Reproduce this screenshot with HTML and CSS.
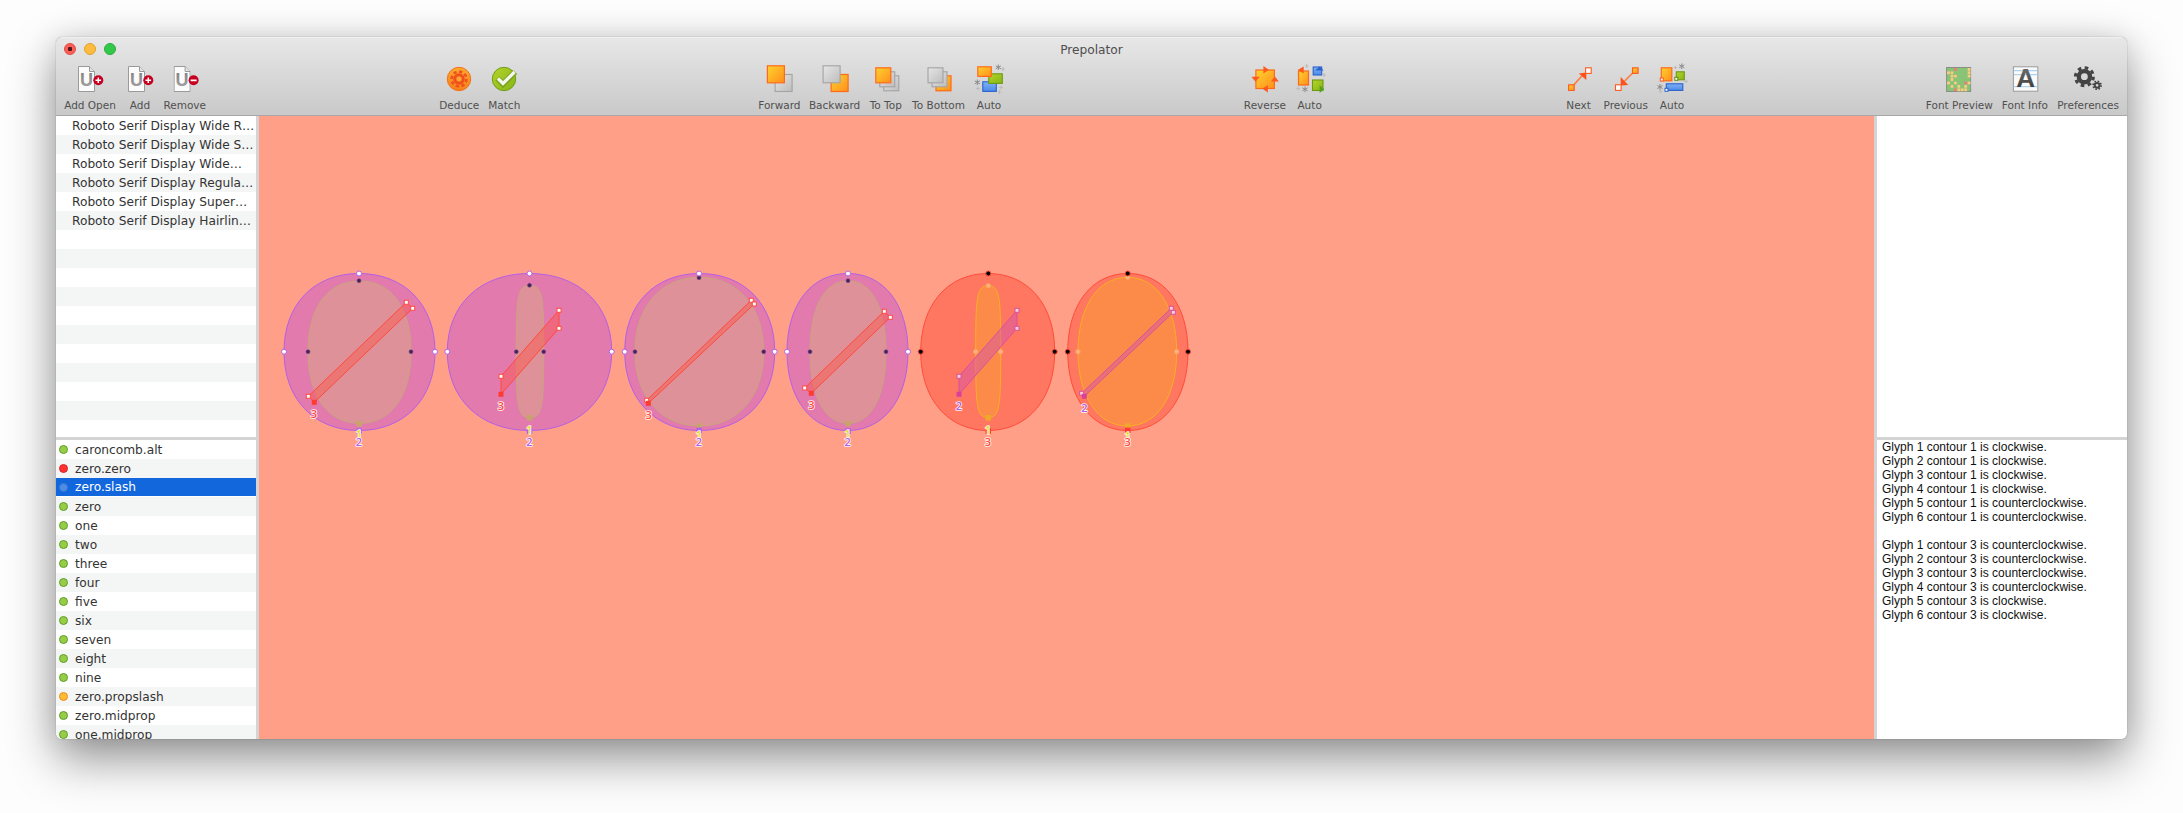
FILE: index.html
```html
<!DOCTYPE html>
<html lang="en">
<head>
<meta charset="utf-8">
<title>Prepolator</title>
<link rel="stylesheet" href="styles.css">
</head>
<body>
<svg class="defs" width="0" height="0" aria-hidden="true">
  <defs>
    <linearGradient id="gO" x1="0" y1="0" x2="1" y2="1"><stop offset="0" stop-color="#ffd22e"/><stop offset="1" stop-color="#ff8f1c"/></linearGradient>
    <linearGradient id="gG" x1="0" y1="0" x2="1" y2="1"><stop offset="0" stop-color="#e6e6e6"/><stop offset="1" stop-color="#bdbdbd"/></linearGradient>
    <linearGradient id="gL" x1="0" y1="0" x2="1" y2="1"><stop offset="0" stop-color="#b4d32c"/><stop offset="1" stop-color="#86b514"/></linearGradient>
    <linearGradient id="gB" x1="0" y1="0" x2="0" y2="1"><stop offset="0" stop-color="#7fb2f5"/><stop offset="1" stop-color="#4d8ae8"/></linearGradient>
    <linearGradient id="gD" x1="0" y1="0" x2="0" y2="1"><stop offset="0" stop-color="#ffab30"/><stop offset="1" stop-color="#f77f18"/></linearGradient>
    <linearGradient id="gU" x1="0" y1="0" x2="0" y2="1"><stop offset="0" stop-color="#7c7c7c"/><stop offset="1" stop-color="#a6a6a6"/></linearGradient>
    <linearGradient id="gA" x1="0" y1="0" x2="0" y2="1"><stop offset="0" stop-color="#777"/><stop offset="1" stop-color="#333"/></linearGradient>
    <symbol id="doc" viewBox="0 0 17 26">
      <path d="M.5.5H11.5L16.5 5.5V25.5H.5Z" fill="#fbfbfb" stroke="#9a9a9a"/>
      <path d="M11.5.5V5.5H16.5" fill="#e2e2e2" stroke="#9a9a9a"/>
      <text class="doc-u" x="8.5" y="19.5" fill="url(#gU)">U</text>
    </symbol>
    <symbol id="star" viewBox="0 0 6 6">
      <path d="M3 0V6M.4 1.5L5.6 4.5M.4 4.5L5.6 1.5" stroke="#8a8a8a" stroke-width="1"/>
    </symbol>
    <symbol id="plus" viewBox="0 0 4 4">
      <path d="M2 0V4M0 2H4" stroke="#bdbdbd" stroke-width="1.2"/>
    </symbol>
  </defs>
</svg>

<div class="window">
  <header class="chrome">
    <div class="titlebar">
      <div class="lights">
        <span class="light light-red"></span>
        <span class="light light-yellow"></span>
        <span class="light light-green"></span>
      </div>
      <div class="title">Prepolator</div>
    </div>
    <div class="toolbar">
      <div class="group g1">
        <div class="tool w60">
          <svg class="icon" viewBox="74 63 32 32"><use href="#doc" x="78" y="66" width="17" height="26"/><circle cx="98.3" cy="80.3" r="5" fill="#c6001f"/><path d="M95.5 80.3H101.1M98.3 77.5V83.1" stroke="#fff" stroke-width="1.5"/></svg>
          <span class="label">Add Open</span>
        </div>
        <div class="tool w40">
          <svg class="icon" viewBox="124 63 32 32"><use href="#doc" x="128" y="66" width="17" height="26"/><circle cx="148.3" cy="80.3" r="5" fill="#c6001f"/><path d="M145.5 80.3H151.1M148.3 77.5V83.1" stroke="#fff" stroke-width="1.5"/></svg>
          <span class="label">Add</span>
        </div>
        <div class="tool w49">
          <svg class="icon" viewBox="168.7 63 32 32"><use href="#doc" x="173.3" y="66" width="17" height="26"/><circle cx="193.3" cy="80.3" r="5" fill="#c6001f"/><path d="M190.3 80.3H196.3" stroke="#fff" stroke-width="1.7"/></svg>
          <span class="label">Remove</span>
        </div>
      </div>

      <div class="group g2">
        <div class="tool w48">
          <svg class="icon" viewBox="444 63 32 32"><circle cx="460" cy="79" r="11.7" fill="url(#gD)" stroke="#f0701c"/><circle cx="460" cy="79" r="7.4" fill="none" stroke="#f0501e" stroke-width="2.6" stroke-dasharray="3.2 2.6"/><circle cx="460" cy="79" r="4.3" fill="none" stroke="#f0501e" stroke-width="3"/><circle cx="460" cy="79" r="2" fill="#ffa73a"/></svg>
          <span class="label">Deduce</span>
        </div>
        <div class="tool w42">
          <svg class="icon" viewBox="489 63 32 32"><circle cx="505" cy="79" r="11.7" fill="url(#gL)" stroke="#6f9e18"/><path d="M498.5 78.5L504 84L516 72" fill="none" stroke="#7da51e" stroke-width="6"/><path d="M499 78.5L504 83.5L515.5 72" fill="none" stroke="#f4f6ee" stroke-width="3.2"/></svg>
          <span class="label">Match</span>
        </div>
      </div>

      <div class="group g3">
        <div class="tool w52">
          <svg class="icon" viewBox="763.4 63 32 32"><rect x="775.5" y="74.5" width="17" height="17" fill="url(#gG)" stroke="#a3a3a3" stroke-width="1.1"/><rect x="767.8" y="65.8" width="17" height="17" fill="url(#gO)" stroke="#ff6a1a" stroke-width="1.2"/></svg>
          <span class="label">Forward</span>
        </div>
        <div class="tool w58">
          <svg class="icon" viewBox="818.7 63 32 32"><rect x="830.8" y="74.5" width="17" height="17" fill="url(#gO)" stroke="#ff6a1a" stroke-width="1.2"/><rect x="822.8" y="65.8" width="17" height="17" fill="url(#gG)" stroke="#a3a3a3" stroke-width="1.1"/></svg>
          <span class="label">Backward</span>
        </div>
        <div class="tool w44">
          <svg class="icon" viewBox="870 63 32 32"><rect x="883.8" y="75.8" width="15" height="15" fill="url(#gG)" stroke="#a3a3a3" stroke-width="1.1"/><rect x="879.8" y="71.8" width="15" height="15" fill="url(#gG)" stroke="#a3a3a3" stroke-width="1.1"/><rect x="875.8" y="67.8" width="15" height="15" fill="url(#gO)" stroke="#ff6a1a" stroke-width="1.2"/></svg>
          <span class="label">To Top</span>
        </div>
        <div class="tool w62">
          <svg class="icon" viewBox="922.8 63 32 32"><rect x="935.8" y="75.8" width="15" height="15" fill="url(#gO)" stroke="#ff6a1a" stroke-width="1.2"/><rect x="931.8" y="71.8" width="15" height="15" fill="url(#gG)" stroke="#a3a3a3" stroke-width="1.1"/><rect x="927.8" y="67.8" width="15" height="15" fill="url(#gG)" stroke="#a3a3a3" stroke-width="1.1"/></svg>
          <span class="label">To Bottom</span>
        </div>
        <div class="tool w39">
          <svg class="icon" viewBox="973 63 32 32"><use href="#star" x="995.3" y="64.3" width="6" height="6"/><use href="#star" x="974.3" y="79.3" width="6" height="6"/><use href="#plus" x="1001" y="67" width="4" height="4"/><use href="#plus" x="999" y="85.5" width="4" height="4"/><use href="#plus" x="997.5" y="90" width="4" height="4"/><use href="#plus" x="976" y="86.5" width="4" height="4"/><rect x="982.8" y="81.8" width="13.5" height="9.6" fill="url(#gB)" stroke="#2a62cc" stroke-width="1.1"/><rect x="988.8" y="73.8" width="13.5" height="9.6" fill="url(#gL)" stroke="#6e9a12" stroke-width="1.1"/><rect x="977.8" y="66.8" width="13.5" height="9.6" fill="url(#gO)" stroke="#ff6a1a" stroke-width="1.2"/></svg>
          <span class="label">Auto</span>
        </div>
      </div>

      <div class="group g4">
        <div class="tool w50">
          <svg class="icon" viewBox="1248.6 63 32 32"><rect x="1255.5" y="70" width="18.5" height="18.5" fill="url(#gO)" stroke="#ff6a1a" stroke-width="1.2"/><path d="M1263 66V73.5L1268.5 69.7ZM1270.5 81.5H1278.5L1274.5 76.5ZM1267.5 85V92.5L1262 88.7ZM1251 76.8H1259.5L1255 81.8Z" fill="#ff5a1e"/></svg>
          <span class="label">Reverse</span>
        </div>
        <div class="tool w39">
          <svg class="icon" viewBox="1293.3 63 32 32"><rect x="1297.8" y="71" width="10" height="14" fill="url(#gO)" stroke="#ff6a1a" stroke-width="1.2"/><path d="M1303 66.5V73.5L1297 70Z" fill="#ff5a1e"/><rect x="1312.5" y="67" width="8.5" height="8" fill="url(#gB)" stroke="#2a62cc" stroke-width="1.1"/><path d="M1314.5 70.5H1323L1319 66.5Z" fill="#2a62cc"/><rect x="1311.8" y="80" width="10.5" height="10.5" fill="url(#gL)" stroke="#6e9a12" stroke-width="1.1"/><path d="M1319 85.5V93L1323.5 89Z" fill="#4fa31e"/><use href="#star" x="1301.3" y="86.3" width="6" height="6"/><use href="#plus" x="1304" y="64" width="4" height="4"/><use href="#plus" x="1295.5" y="86.5" width="4" height="4"/><use href="#plus" x="1321.5" y="73" width="4" height="4"/></svg>
          <span class="label">Auto</span>
        </div>
      </div>

      <div class="group g5">
        <div class="tool w36">
          <svg class="icon" viewBox="1562.2 63 32 32"><path d="M1572 86L1581 76" stroke="#ff7a3c" stroke-width="1.6"/><path d="M1585.5 72.5V80L1578 73.5Z" fill="#ff4f1a"/><rect x="1567.8" y="84.8" width="5.6" height="5.6" fill="url(#gO)" stroke="#ff5a1e" stroke-width="1.1"/><rect x="1584.8" y="67.8" width="5.6" height="5.6" fill="#fff" stroke="#ff5a1e" stroke-width="1.1"/></svg>
          <span class="label">Next</span>
        </div>
        <div class="tool w58">
          <svg class="icon" viewBox="1609.3 63 32 32"><path d="M1633 72L1624 81" stroke="#ff7a3c" stroke-width="1.6"/><path d="M1620 85.5V77L1627.5 85Z" fill="#ff4f1a"/><rect x="1631.8" y="67.8" width="5.6" height="5.6" fill="url(#gO)" stroke="#ff5a1e" stroke-width="1.1"/><rect x="1614.8" y="84.8" width="5.6" height="5.6" fill="#fff" stroke="#ff5a1e" stroke-width="1.1"/></svg>
          <span class="label">Previous</span>
        </div>
        <div class="tool w34">
          <svg class="icon" viewBox="1655.5 63 32 32"><use href="#star" x="1678.3" y="63.3" width="6" height="6"/><use href="#star" x="1656.5" y="84" width="6" height="6"/><use href="#plus" x="1673" y="65.5" width="4" height="4"/><use href="#plus" x="1683.5" y="79.5" width="4" height="4"/><use href="#plus" x="1658" y="89.5" width="4" height="4"/><rect x="1660.8" y="67.8" width="10.5" height="13" fill="url(#gO)" stroke="#ff6a1a" stroke-width="1.2"/><rect x="1659.8" y="78" width="3" height="3" fill="#fff" stroke="#ff5a1e"/><rect x="1675.8" y="71.8" width="8" height="8" fill="url(#gL)" stroke="#6e9a12" stroke-width="1.1"/><rect x="1674.3" y="77.3" width="3" height="3" fill="#fff" stroke="#5f8c10"/><rect x="1665.8" y="83.8" width="16.5" height="6.6" fill="url(#gB)" stroke="#2a62cc" stroke-width="1.1"/><rect x="1664.5" y="88.3" width="3" height="3" fill="#fff" stroke="#2a62cc"/></svg>
          <span class="label">Auto</span>
        </div>
      </div>

      <div class="group g6">
        <div class="tool w76">
          <svg class="icon" viewBox="1942.9 63 32 32"><rect x="1946.5" y="67.5" width="24" height="24" fill="#7ecb6e" stroke="#8a8a8a"/><path d="M1947 71.3h3v3h-3zM1950.4 71.3h3v3h-3zM1967.4 68h3v3h-3zM1967.4 71.3h3v3h-3zM1950.4 74.7h3v3h-3zM1953.8 74.7h3v3h-3zM1967.4 74.7h3v3h-3zM1950.4 78.1h3v3h-3zM1947 81.5h3v3h-3zM1953.8 81.5h3v3h-3zM1967.4 81.5h3v3h-3zM1950.4 84.9h3v3h-3zM1957.2 84.9h3v3h-3zM1964 84.9h3v3h-3zM1957.2 88.3h3v3h-3zM1960.6 88.3h3v3h-3zM1964 88.3h3v3h-3z" fill="#f5d27a"/><path d="M1953.8 68h3v3h-3zM1964 81.5h3v3h-3zM1953.8 88.3h3v3h-3z" fill="#ec7f74"/><path d="M1950.2 67.5V91.5M1953.6 67.5V91.5M1957 67.5V91.5M1960.4 67.5V91.5M1963.8 67.5V91.5M1967.2 67.5V91.5M1946.5 71H1970.5M1946.5 74.4H1970.5M1946.5 77.8H1970.5M1946.5 81.2H1970.5M1946.5 84.6H1970.5M1946.5 88H1970.5" stroke="#a9b08e" stroke-width=".5"/></svg>
          <span class="label">Font Preview</span>
        </div>
        <div class="tool w55">
          <svg class="icon" viewBox="2008.4 63 32 32"><rect x="2012.8" y="66.8" width="24.4" height="24.4" fill="#fafafa" stroke="#9b9b9b"/><path d="M2013 70.7H2037M2013 74.7H2037M2013 86.7H2037" stroke="#9cc9ee" stroke-width="1"/><text class="info-a" x="2025" y="87" fill="url(#gA)">A</text></svg>
          <span class="label">Font Info</span>
        </div>
        <div class="tool w71">
          <svg class="icon" viewBox="2071.6 63 32 32"><circle cx="2084" cy="76.7" r="9" fill="none" stroke="#444" stroke-width="3" stroke-dasharray="3.6 3.47"/><circle cx="2084" cy="76.7" r="5.6" fill="none" stroke="#444" stroke-width="4.4"/><circle cx="2096.7" cy="85.3" r="4" fill="none" stroke="#444" stroke-width="1.6" stroke-dasharray="1.6 1.54"/><circle cx="2096.7" cy="85.3" r="2.4" fill="none" stroke="#444" stroke-width="2"/></svg>
          <span class="label">Preferences</span>
        </div>
      </div>
    </div>
  </header>

  <div class="body">
    <aside class="side side-left">
      <ul class="list list-top">
        <li class="row">Roboto Serif Display Wide R…</li>
        <li class="row">Roboto Serif Display Wide S…</li>
        <li class="row">Roboto Serif Display Wide…</li>
        <li class="row">Roboto Serif Display Regula…</li>
        <li class="row">Roboto Serif Display Super…</li>
        <li class="row">Roboto Serif Display Hairlin…</li>
        <li class="row"></li><li class="row"></li><li class="row"></li><li class="row"></li><li class="row"></li>
        <li class="row"></li><li class="row"></li><li class="row"></li><li class="row"></li><li class="row"></li><li class="row"></li>
      </ul>
      <ul class="list list-bottom">
        <li class="row"><i class="dot dot-green"></i>caroncomb.alt</li>
        <li class="row"><i class="dot dot-red"></i>zero.zero</li>
        <li class="row selected"><i class="dot dot-blue"></i>zero.slash</li>
        <li class="row"><i class="dot dot-green"></i>zero</li>
        <li class="row"><i class="dot dot-green"></i>one</li>
        <li class="row"><i class="dot dot-green"></i>two</li>
        <li class="row"><i class="dot dot-green"></i>three</li>
        <li class="row"><i class="dot dot-green"></i>four</li>
        <li class="row"><i class="dot dot-green"></i>five</li>
        <li class="row"><i class="dot dot-green"></i>six</li>
        <li class="row"><i class="dot dot-green"></i>seven</li>
        <li class="row"><i class="dot dot-green"></i>eight</li>
        <li class="row"><i class="dot dot-green"></i>nine</li>
        <li class="row"><i class="dot dot-orange"></i>zero.propslash</li>
        <li class="row"><i class="dot dot-green"></i>zero.midprop</li>
        <li class="row"><i class="dot dot-green"></i>one.midprop</li>
      </ul>
    </aside>

    <main class="canvas">
      <svg class="stage" viewBox="259 116 1615 623">
        <!-- glyph 1 -->
        <g class="scheme-a">
          <path class="outer" d="M359 273.5C404.3 273.5 435 304.6 435 351.7C435 398.8 404.3 430.5 359 430.5C313.7 430.5 284 398.8 284 351.7C284 304.6 313.7 273.5 359 273.5Z"/>
          <path class="inner" d="M359.5 281C391.5 281 411 307.7 411 351.7C411 395.7 391.5 423.3 359.5 423.3C327.5 423.3 308 395.7 308 351.7C308 307.7 327.5 281 359.5 281Z"/>
          <polygon class="slash" points="406.3,302.3 412.7,308.3 314.3,402.3 308.3,396.3"/>
          <rect class="s-outer" x="356.3" y="428.3" width="5.5" height="5.5"/>
          <rect class="s-inner" x="356.3" y="421" width="5.5" height="5.5"/>
          <circle class="p-outer" cx="359" cy="273.5" r="2.5"/><circle class="p-outer" cx="284" cy="351.7" r="2.5"/><circle class="p-outer" cx="435" cy="351.7" r="2.5"/>
          <circle class="p-inner" cx="359" cy="280.7" r="2"/><circle class="p-inner" cx="308" cy="351.7" r="2"/><circle class="p-inner" cx="411" cy="351.7" r="2"/>
          <rect class="p-slash" x="404.3" y="300.3" width="4" height="4"/><rect class="p-slash" x="410.7" y="306.3" width="4" height="4"/><rect class="p-slash" x="306.3" y="394.3" width="4" height="4"/><rect class="s-slash" x="311.8" y="399.8" width="5" height="5"/>
          <text class="num n1" x="359" y="438">1</text><text class="num n2" x="359" y="446.3">2</text><text class="num n3" x="314" y="418">3</text>
        </g>
        <!-- glyph 2 -->
        <g class="scheme-a">
          <path class="outer" d="M529.5 273.5C578.8 273.5 611.7 304.6 611.7 351.7C611.7 398.8 578.8 430.5 529.5 430.5C480.2 430.5 447.3 398.8 447.3 351.7C447.3 304.6 480.2 273.5 529.5 273.5Z"/>
          <path class="inner" d="M530 285.3C543 285.3 543.7 298.7 543.7 351.7C543.7 404.7 543 417.7 530 417.7C517 417.7 516.3 404.7 516.3 351.7C516.3 298.7 517 285.3 530 285.3Z"/>
          <polygon class="slash" points="559,310.3 559,328.3 501,394.3 501,376.3"/>
          <rect class="s-inner" x="526.8" y="415" width="5.5" height="5.5"/>
          <rect class="s-outer" x="526.8" y="428.3" width="5.5" height="5.5"/>
          <circle class="p-outer" cx="529.5" cy="273.5" r="2.5"/><circle class="p-outer" cx="447.3" cy="351.7" r="2.5"/><circle class="p-outer" cx="611.7" cy="351.7" r="2.5"/>
          <circle class="p-inner" cx="529.5" cy="285.3" r="2"/><circle class="p-inner" cx="516.3" cy="351.7" r="2"/><circle class="p-inner" cx="543.7" cy="351.7" r="2"/>
          <rect class="p-slash" x="557" y="308.3" width="4" height="4"/><rect class="p-slash" x="557" y="326.3" width="4" height="4"/><rect class="p-slash" x="499" y="374.3" width="4" height="4"/><rect class="s-slash" x="498.5" y="391.8" width="5" height="5"/>
          <text class="num n1" x="529.5" y="434">1</text><text class="num n2" x="529.5" y="446.3">2</text><text class="num n3" x="501" y="410">3</text>
        </g>
        <!-- glyph 3 -->
        <g class="scheme-a">
          <path class="outer" d="M699.5 273.5C744.7 273.5 774.7 304.6 774.7 351.7C774.7 398.8 744.7 430.5 699.5 430.5C654.7 430.5 624.7 398.8 624.7 351.7C624.7 304.6 654.7 273.5 699.5 273.5Z"/>
          <path class="inner" d="M699.4 277.3C738 277.3 763.7 307.1 763.7 351.7C763.7 396.3 738 426 699.4 426C660.8 426 635 396.3 635 351.7C635 307.1 660.8 277.3 699.4 277.3Z"/>
          <polygon class="slash" points="751.3,300.3 754.3,304 648.3,403.3 646.7,400.3"/>
          <rect class="s-inner" x="696.3" y="423.3" width="5.5" height="5.5"/>
          <rect class="s-outer" x="696.3" y="427.6" width="5.5" height="5.5"/>
          <circle class="p-inner" cx="699" cy="277.7" r="2"/><circle class="p-inner" cx="635" cy="351.7" r="2"/><circle class="p-inner" cx="763.7" cy="351.7" r="2"/>
          <circle class="p-outer" cx="699" cy="273.5" r="2.5"/><circle class="p-outer" cx="624.7" cy="351.7" r="2.5"/><circle class="p-outer" cx="774.7" cy="351.7" r="2.5"/>
          <rect class="p-slash" x="749.3" y="298.3" width="4" height="4"/><rect class="p-slash" x="752.3" y="302" width="4" height="4"/><rect class="p-slash" x="644.7" y="398.3" width="4" height="4"/><rect class="s-slash" x="645.8" y="400.8" width="5" height="5"/>
          <text class="num n1" x="699" y="439">1</text><text class="num n2" x="699" y="446.3">2</text><text class="num n3" x="648.7" y="419">3</text>
        </g>
        <!-- glyph 4 -->
        <g class="scheme-a">
          <path class="outer" d="M847.7 273.5C884 273.5 908 304.6 908 351.7C908 398.8 884 430.5 847.7 430.5C811.4 430.5 787 398.8 787 351.7C787 304.6 811.4 273.5 847.7 273.5Z"/>
          <path class="inner" d="M848 280.7C871.6 280.7 886 307.7 886 351.7C886 395.7 871.6 423.3 848 423.3C824.4 423.3 810 395.7 810 351.7C810 307.7 824.4 280.7 848 280.7Z"/>
          <polygon class="slash" points="884.3,311.3 890.3,317.3 811.3,393.3 804.7,388"/>
          <rect class="s-inner" x="845.3" y="420.8" width="5.5" height="5.5"/>
          <rect class="s-outer" x="845.3" y="428.3" width="5.5" height="5.5"/>
          <circle class="p-outer" cx="848" cy="273.5" r="2.5"/><circle class="p-outer" cx="787" cy="351.7" r="2.5"/><circle class="p-outer" cx="908" cy="351.7" r="2.5"/>
          <circle class="p-inner" cx="848" cy="280.7" r="2"/><circle class="p-inner" cx="810" cy="351.7" r="2"/><circle class="p-inner" cx="886" cy="351.7" r="2"/>
          <rect class="p-slash" x="882.3" y="309.3" width="4" height="4"/><rect class="p-slash" x="888.3" y="315.3" width="4" height="4"/><rect class="p-slash" x="802.7" y="386" width="4" height="4"/><rect class="s-slash" x="808.8" y="390.8" width="5" height="5"/>
          <text class="num n1" x="847.7" y="438.3">1</text><text class="num n2" x="847.7" y="446.3">2</text><text class="num n3" x="811.3" y="409">3</text>
        </g>
        <!-- glyph 5 -->
        <g class="scheme-b">
          <path class="outer" d="M988 273.5C1028.2 273.5 1054.7 304.6 1054.7 351.7C1054.7 398.8 1028.2 430.5 988 430.5C947.8 430.5 920.7 398.8 920.7 351.7C920.7 304.6 947.8 273.5 988 273.5Z"/>
          <path class="inner" d="M988.2 285.7C1000.1 285.7 1000.7 298.7 1000.7 351.7C1000.7 404.7 1000.1 417.7 988.2 417.7C976.3 417.7 975.7 404.7 975.7 351.7C975.7 298.7 976.3 285.7 988.2 285.7Z"/>
          <polygon class="slash" points="1017,310.3 1017,328.3 959,394.3 959,376.3"/>
          <rect class="s-inner" x="985.5" y="415" width="5.5" height="5.5"/>
          <rect class="s-outer" x="985.5" y="428.3" width="5.5" height="5.5"/>
          <circle class="p-outer" cx="988.3" cy="273.5" r="2.5"/><circle class="p-outer" cx="920.7" cy="351.7" r="2.5"/><circle class="p-outer" cx="1054.7" cy="351.7" r="2.5"/>
          <circle class="p-inner" cx="988.3" cy="285.7" r="2.3"/><circle class="p-inner" cx="975.7" cy="351.7" r="2.3"/><circle class="p-inner" cx="1000.7" cy="351.7" r="2.3"/>
          <rect class="p-slash" x="1015" y="308.3" width="4" height="4"/><rect class="p-slash" x="1015" y="326.3" width="4" height="4"/><rect class="p-slash" x="957" y="374.3" width="4" height="4"/><rect class="s-slash" x="956.5" y="391.8" width="5" height="5"/>
          <text class="num n1" x="988" y="434">1</text><text class="num n3" x="988" y="446.3">3</text><text class="num n2" x="959" y="410">2</text>
        </g>
        <!-- glyph 6 -->
        <g class="scheme-b">
          <path class="outer" d="M1127.8 273.5C1163.9 273.5 1188 304.6 1188 351.7C1188 398.8 1163.9 430.5 1127.8 430.5C1091.7 430.5 1067.7 398.8 1067.7 351.7C1067.7 304.6 1091.7 273.5 1127.8 273.5Z"/>
          <path class="inner" d="M1127.4 277.3C1157 277.3 1176.7 307.1 1176.7 351.7C1176.7 396.3 1157 426 1127.4 426C1097.8 426 1078 396.3 1078 351.7C1078 307.1 1097.8 277.3 1127.4 277.3Z"/>
          <polygon class="slash" points="1171.3,308.3 1173.3,312.3 1084.3,396.3 1081.7,393.3"/>
          <rect class="s-inner" x="1125" y="423.3" width="5.5" height="5.5"/>
          <rect class="s-outer" x="1125" y="427.6" width="5.5" height="5.5"/>
          <circle class="p-inner" cx="1127.7" cy="277.3" r="2.3"/><circle class="p-inner" cx="1078" cy="351.7" r="2.3"/><circle class="p-inner" cx="1176.7" cy="351.7" r="2.3"/>
          <circle class="p-outer" cx="1127.7" cy="273.5" r="2.5"/><circle class="p-outer" cx="1067.7" cy="351.7" r="2.5"/><circle class="p-outer" cx="1188" cy="351.7" r="2.5"/>
          <rect class="p-slash" x="1169.3" y="306.3" width="4" height="4"/><rect class="p-slash" x="1171.3" y="310.3" width="4" height="4"/><rect class="p-slash" x="1079.7" y="391.3" width="4" height="4"/><rect class="s-slash" x="1081.8" y="393.8" width="5" height="5"/>
          <text class="num n1" x="1127.7" y="439.5">1</text><text class="num n3" x="1127.7" y="446.3">3</text><text class="num n2" x="1084.3" y="412.3">2</text>
        </g>
      </svg>
    </main>

    <aside class="side side-right">
      <div class="pane-blank"></div>
      <div class="log">
        <p>Glyph 1 contour 1 is clockwise.</p>
        <p>Glyph 2 contour 1 is clockwise.</p>
        <p>Glyph 3 contour 1 is clockwise.</p>
        <p>Glyph 4 contour 1 is clockwise.</p>
        <p>Glyph 5 contour 1 is counterclockwise.</p>
        <p>Glyph 6 contour 1 is counterclockwise.</p>
        <p class="gap">Glyph 1 contour 3 is counterclockwise.</p>
        <p>Glyph 2 contour 3 is counterclockwise.</p>
        <p>Glyph 3 contour 3 is counterclockwise.</p>
        <p>Glyph 4 contour 3 is counterclockwise.</p>
        <p>Glyph 5 contour 3 is clockwise.</p>
        <p>Glyph 6 contour 3 is clockwise.</p>
      </div>
    </aside>
  </div>
</div>
</body>
</html>
```
FILE: styles.css
```css
* { box-sizing: border-box; }
html, body { margin: 0; height: 100%; }
body {
  background: #fdfdfd;
  overflow: hidden;
  font-family: "DejaVu Sans", "Open Sans", sans-serif;
  padding: 37px 56px 0;
}
.defs { position: absolute; width: 0; height: 0; }

.window {
  width: 2071px;
  height: 702px;
  display: flex;
  flex-direction: column;
  border-radius: 6px;
  overflow: hidden;
  background: #d4d4d4;
  box-shadow: 0 0 1px rgba(0,0,0,.55), 0 20px 48px rgba(0,0,0,.42), 0 0 28px rgba(0,0,0,.1);
}

/* title bar and toolbar */
.chrome {
  flex: 0 0 79px;
  background: linear-gradient(#e7e7e7, #c9c9c9);
  border-top: 1px solid #f0f0f0;
  border-bottom: 1px solid #a8a8a8;
}
.titlebar {
  position: relative;
  height: 23px;
  display: flex;
  align-items: center;
  justify-content: center;
}
.lights {
  position: absolute;
  left: 8px;
  top: 5px;
  display: flex;
  gap: 8px;
}
.light { width: 12px; height: 12px; border-radius: 50%; display: block; }
.light-red { background: radial-gradient(circle, #4a1a1a 0 2px, #fb5f57 2.5px); border: 1px solid #e2463f; }
.light-yellow { background: #fdbc40; border: 1px solid #e0a22e; }
.light-green { background: #34c84a; border: 1px solid #2aac3b; }
.title {
  font-family: "DejaVu Sans", sans-serif;
  font-size: 12.2px;
  color: #4e4e4e;
}
.toolbar {
  display: flex;
  padding: 2px 0 0 4px;
}
.group { display: flex; }
.g2 { margin-left: 225.9px; }
.g3 { margin-left: 228.1px; }
.g4 { margin-left: 231.2px; }
.g5 { margin-left: 231.2px; }
.g6 { margin-left: 232.3px; }
.tool {
  display: flex;
  flex-direction: column;
  align-items: center;
}
.w34 { width: 34.2px; }
.w36 { width: 36px; }
.w39 { width: 39.4px; }
.w40 { width: 40px; }
.w42 { width: 42px; }
.w44 { width: 44px; }
.w48 { width: 48px; }
.w49 { width: 49.4px; }
.w50 { width: 50px; }
.w52 { width: 52px; }
.w55 { width: 55px; }
.w58 { width: 58.4px; }
.w60 { width: 60px; }
.w62 { width: 61.6px; }
.w71 { width: 71.4px; }
.w76 { width: 76px; }
.icon { width: 32px; height: 32px; display: block; flex: none; overflow: visible; }
.label {
  margin-top: 3px;
  font-size: 10.5px;
  line-height: 14px;
  color: #505050;
  white-space: nowrap;
}
.doc-u {
  font-family: "Liberation Sans", sans-serif;
  font-weight: 700;
  font-size: 18px;
  text-anchor: middle;
}
.info-a {
  font-family: "Liberation Sans", sans-serif;
  font-weight: 700;
  font-size: 26px;
  text-anchor: middle;
}

/* main body */
.body { flex: 1; display: flex; gap: 3px; min-height: 0; }
.side { display: flex; flex-direction: column; gap: 3px; flex: none; }
.side-left { width: 200px; }
.side-right { width: 250px; }

.list {
  list-style: none;
  margin: 0;
  padding: 0;
  overflow: hidden;
  background: #fff;
  font-size: 12.2px;
  color: #333;
}
.list-top { height: 321px; flex: none; }
.list-bottom { flex: 1; min-height: 0; }
.row {
  height: 19px;
  line-height: 19px;
  padding-top: 1px;
  white-space: nowrap;
  display: flex;
  align-items: center;
}
.list-top .row { padding-left: 16px; }
.list-bottom .row { padding-left: 3px; }
.row:nth-child(even) { background: #f4f5f5; }
.row.selected { background: #1267dd; color: #fff; height: 18px; margin-bottom: 1px; }
.dot {
  flex: none;
  width: 9px;
  height: 9px;
  border-radius: 50%;
  margin: -1px 7px 0 0;
  border: 1px solid;
}
.dot-green { background: #96cc46; border-color: #5f9e2c; }
.dot-red { background: #ff3030; border-color: #d62a2a; }
.dot-blue { background: #4f8ce2; border-color: #3a78d8; }
.dot-orange { background: #ffbb33; border-color: #f08a22; }

.canvas { flex: 1; background: #ff9f87; min-width: 0; }
.stage { display: block; width: 100%; height: 100%; }

.pane-blank { height: 321px; flex: none; background: #fff; }
.log {
  flex: 1;
  background: #fff;
  padding-left: 5px;
  font-family: "Liberation Sans", Arial, sans-serif;
  font-size: 12px;
  line-height: 14px;
  color: #111;
}
.log p { margin: 0; }
.log .gap { margin-top: 14px; }

/* glyph overlay */
.scheme-a .outer { fill: rgba(197,85,213,.5); stroke: #b55fe6; stroke-width: 1; }
.scheme-a .inner { fill: rgba(218,168,132,.5); stroke: #c9a57c; stroke-width: 1; }
.scheme-a .slash { fill: rgba(255,80,65,.42); stroke: #ff4a3c; stroke-width: 1; }
.scheme-a .p-outer { fill: #fff; stroke: #b55fe6; stroke-width: 1; }
.scheme-a .p-inner { fill: #43205e; stroke: #7d4a80; stroke-width: .6; }
.scheme-a .p-slash { fill: #fff; stroke: #ff4a3c; stroke-width: 1; }
.scheme-a .s-slash { fill: #ff3a30; }
.scheme-a .s-inner { fill: #c8a46c; }
.scheme-a .s-outer { fill: #b55fe6; }

.scheme-b .outer { fill: rgba(255,80,60,.5); stroke: #ff4c3a; stroke-width: 1; }
.scheme-b .inner { fill: rgba(249,160,52,.5); stroke: #f7b022; stroke-width: 1; }
.scheme-b .slash { fill: rgba(210,80,175,.45); stroke: #d9509c; stroke-width: 1; }
.scheme-b .p-outer { fill: #000; stroke: #ff4c3a; stroke-width: 1; }
.scheme-b .p-inner { fill: #ffb08a; stroke: #f7a64a; stroke-width: .8; }
.scheme-b .p-slash { fill: #f8d0dc; stroke: #d9509c; stroke-width: 1; }
.scheme-b .s-slash { fill: #d9409c; }
.scheme-b .s-inner { fill: #f0a828; }
.scheme-b .s-outer { fill: #ff3a30; }

.num {
  font-family: "Open Sans", "Liberation Sans", sans-serif;
  font-size: 11px;
  font-weight: 600;
  text-anchor: middle;
  paint-order: stroke;
  stroke: rgba(255,255,255,.9);
  stroke-width: 1.6;
  stroke-linejoin: round;
}
.n1 { fill: #dfe230; }
.n2 { fill: #b55fe6; }
.n3 { fill: #ff4a3c; }
```
